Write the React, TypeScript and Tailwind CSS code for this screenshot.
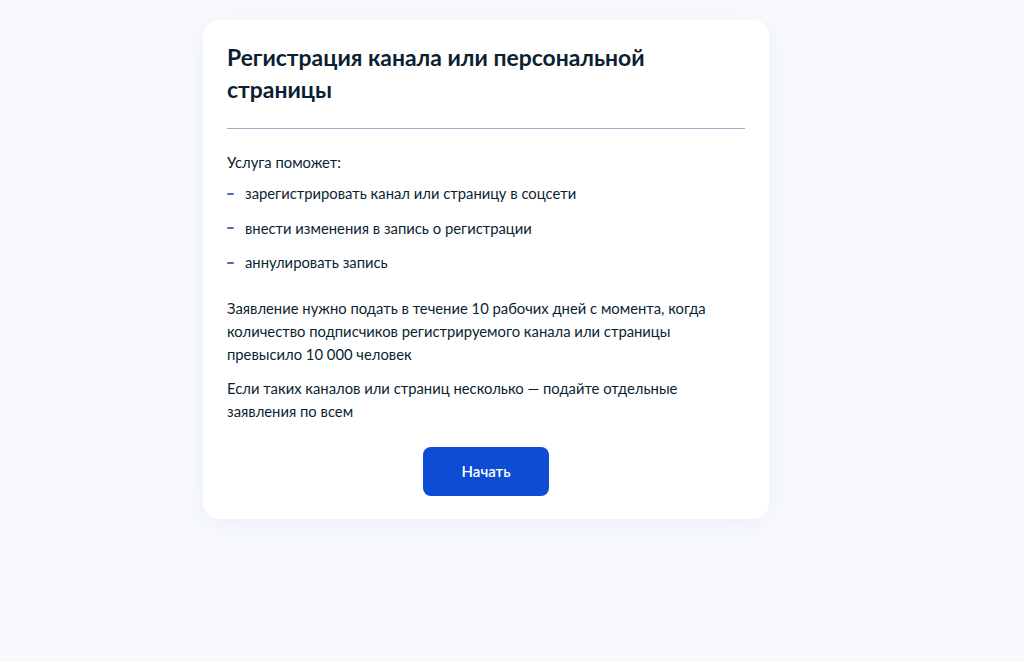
export default function App() {
  const items = [
    'зарегистрировать канал или страницу в соцсети',
    'внести изменения в запись о регистрации',
    'аннулировать запись',
  ]
  return (
    <div className="min-h-[662px] w-full bg-[#f8fafd] pt-5 font-['Lato','Noto_Sans',sans-serif] text-[#0b1f33]">
      <div className="ml-[203px] w-[566px] rounded-2xl bg-white px-6 pb-[23px] pt-[22px] shadow-[0_4px_24px_rgba(39,74,128,0.07)]">
        <h1 className="max-w-[440px] text-[22.9px] font-bold leading-[31.5px]">
          Регистрация канала или персональной страницы
        </h1>
        <div className="mt-[23px] h-px bg-[#98adc8]" />
        <div className="pt-[22px] text-[14.8px] leading-[23px]">
          <p>Услуга поможет:</p>
          <ul className="mt-2 flex flex-col gap-[11.5px]">
            {items.map((t) => (
              <li key={t} className="flex items-center">
                <span className="mr-[11px] h-[2px] w-[7px] shrink-0 rounded-full bg-[#4b6fae]" />
                <span>{t}</span>
              </li>
            ))}
          </ul>
          <p className="mt-[23px]">
            Заявление нужно подать в течение 10 рабочих дней с момента, когда количество подписчиков регистрируемого
            канала или страницы превысило 10 000 человек
          </p>
          <p className="mt-[11px]">Если таких каналов или страниц несколько — подайте отдельные заявления по всем</p>
        </div>
        <div className="mt-6 flex justify-center">
          <button
            type="button"
            className="h-[49px] w-[126px] rounded-lg bg-[#0d4cd3] text-[15px] font-semibold text-white"
          >
            Начать
          </button>
        </div>
      </div>
    </div>
  )
}
